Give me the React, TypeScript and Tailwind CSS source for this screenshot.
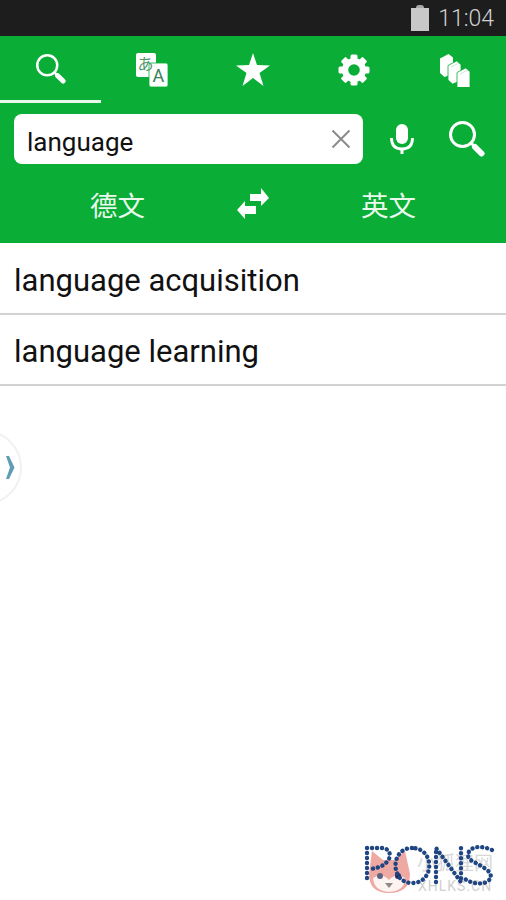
const sans = "font-['Roboto','Noto_Sans_CJK_SC',sans-serif]";
const green = "#0aad35";

function SearchIcon({ size }: { size: number }) {
  return (
    <svg width={size} height={size} viewBox="0 0 36 36" fill="none" stroke="white" strokeLinecap="round">
      <circle cx="13.5" cy="13.5" r="12" strokeWidth="3" />
      <path d="M22 22 L26 26" strokeWidth="3" />
      <path d="M26 26 L32.5 32.5" strokeWidth="6" />
    </svg>
  );
}

function TranslateIcon() {
  return (
    <svg width="34" height="36" viewBox="0 0 34 36">
      <rect x="1" y="1" width="20" height="24" rx="2" fill="white" />
      <rect x="14" y="11" width="19" height="24" rx="2" fill="white" stroke={green} strokeWidth="0.8" />
      <text x="2.5" y="18" fontSize="16" fill="#4f9a6b" fontFamily="'Noto Sans CJK JP'">
        あ
      </text>
      <text x="17.5" y="30" fontSize="18" fill="#38805a" fontFamily="Roboto">
        A
      </text>
    </svg>
  );
}

function StarIcon() {
  return (
    <svg width="34" height="33" viewBox="0 0 34 33" fill="white">
      <path d="M17 0 L21 12 L34 12.5 L23.5 20 L27.5 33 L17 25 L6.5 33 L10.5 20 L0 12.5 L13 12 Z" />
    </svg>
  );
}

function GearIcon() {
  const teeth = [0, 45, 90, 135, 180, 225, 270, 315];
  return (
    <svg width="32" height="32" viewBox="0 0 32 32" fill="white">
      <circle cx="16" cy="16" r="12" />
      {teeth.map((deg) => (
        <rect key={deg} x="12.5" y="0.5" width="7" height="7" rx="1.5" transform={`rotate(${deg} 16 16)`} />
      ))}
      <circle cx="16" cy="16" r="5.8" fill={green} />
    </svg>
  );
}

function BooksIcon() {
  const book = "M0 4.5 L8.5 0 L13 3.5 V20 L4.5 23 L0 19 Z";
  return (
    <svg width="32" height="34" viewBox="0 0 32 34" fill="white">
      <path d={book} transform="translate(1 1)" />
      <path d={book} transform="translate(9 8)" stroke={green} strokeWidth="0.8" />
      <path d={book} transform="translate(18 15)" stroke={green} strokeWidth="0.8" />
      <path d="M12 14 L20 10 M21 21 L29 17" stroke="#cfe9d6" strokeWidth="1" />
    </svg>
  );
}

function MicIcon() {
  return (
    <svg width="24" height="30" viewBox="0 0 24 30" fill="none">
      <rect x="6" y="0" width="12" height="20" rx="6" fill="white" />
      <path d="M1.5 14 Q1.5 25 12 25 Q22.5 25 22.5 14" stroke="white" strokeWidth="2.8" />
      <rect x="10.5" y="24" width="3" height="6" fill="white" />
    </svg>
  );
}

function CloseIcon() {
  return (
    <svg width="20" height="20" viewBox="0 0 20 20" stroke="#8a8a8a" strokeWidth="1.9">
      <path d="M1.5 1.5 L18.5 18.5 M18.5 1.5 L1.5 18.5" />
    </svg>
  );
}

function SwapIcon() {
  return (
    <svg width="34" height="34" viewBox="0 0 34 34" fill="white">
      <path d="M14 8 H25 V2 L33 12 L25 20 V15 H14 Z" />
      <path d="M20 20 H9 V15 L1 24 L9 33 V28 H20 Z" />
    </svg>
  );
}

function PonsLogo() {
  const dots = {
    fill: "none",
    stroke: "#1f4582",
    strokeWidth: 4.4,
    strokeLinecap: "round" as const,
    strokeLinejoin: "round" as const,
    strokeDasharray: "0.1 4.9",
  };
  return (
    <svg width="136" height="56" viewBox="0 0 136 56">
      {/* fox head */}
      <path d="M10 9 L21 18 H33 L43 9 L48 32 Q48 51 27 51 Q7 51 7 32 Z" fill="#efa9a3" />
      <path d="M11 36 Q20 30 27 38 Q34 30 43 36 Q43 49 27 50 Q12 49 11 36 Z" fill="#fdf3f1" />
      <path d="M23 41 H31 L27 46 Z" fill="#8b8b8b" />
      <circle cx="18" cy="34" r="3" fill="#5b6485" />
      <circle cx="36" cy="34" r="3" fill="#1f2f60" />
      {/* letters */}
      <path d="M5 36 V6 H21 Q30 8 27 17 Q22 26 7 27" {...dots} />
      <path d="M50 6 C28 6 28 41 50 41 C73 41 73 6 50 6 Z" {...dots} />
      <path d="M74 40 V6 L99 40 V6" {...dots} />
      <path d="M130 8 Q116 2 108 8 Q102 16 114 21 L124 27 Q133 34 125 40 Q114 44 103 37" {...dots} />
    </svg>
  );
}

export default function App() {
  return (
    <div className={`relative h-[900px] w-[506px] overflow-hidden bg-white ${sans}`}>
      <div className="flex h-9 items-center justify-end gap-[9px] bg-[#1d1d1d] pr-[12px]">
        <div className="flex flex-col items-center">
          <div className="h-[3px] w-2 rounded-t-sm bg-[#a8a8a8]" />
          <div className="h-[23px] w-[18px] bg-[#c8c8c8]" />
        </div>
        <span className="text-[23px] font-light leading-none text-[#d0d0d0]">11:04</span>
      </div>

      <div className="bg-[#0aad35]">
        <div className="flex h-[67px]">
          <div className="flex w-[101px] items-center justify-center border-b-[3px] border-[#e8f8ea] pt-[2px]">
            <SearchIcon size={30} />
          </div>
          <div className="flex w-[101px] items-center justify-center">
            <TranslateIcon />
          </div>
          <div className="flex w-[101px] items-center justify-center">
            <StarIcon />
          </div>
          <div className="flex w-[101px] items-center justify-center">
            <GearIcon />
          </div>
          <div className="flex w-[102px] items-center justify-center">
            <BooksIcon />
          </div>
        </div>

        <div className="flex items-center pl-3.5 pt-[11px]">
          <div className="flex h-[50px] w-[349px] items-center justify-between rounded-lg bg-white pl-[13px] pr-[12px]">
            <span className="pt-[5px] text-[26px] leading-none text-[#111]">language</span>
            <CloseIcon />
          </div>
          <div className="ml-[27px]">
            <MicIcon />
          </div>
          <div className="ml-[35px]">
            <SearchIcon size={36} />
          </div>
        </div>

        <div className="grid h-[79px] grid-cols-[235px_36px_235px] items-center pt-[6px]">
          <span className="text-center text-[27.5px] leading-none text-[#e9f9ec]">德文</span>
          <div className="-mt-[7px] flex justify-center">
            <SwapIcon />
          </div>
          <span className="text-center text-[27.5px] leading-none text-[#e9f9ec]">英文</span>
        </div>
      </div>

      <div className="flex h-[72px] items-center border-b-2 border-[#d2d2d2] pl-3.5 pt-[5px]">
        <span className="text-[31px] leading-none text-[#111]">language acquisition</span>
      </div>
      <div className="flex h-[71px] items-center border-b-2 border-[#d2d2d2] pl-3.5 pt-[4px]">
        <span className="text-[31px] leading-none text-[#111]">language learning</span>
      </div>

      <div className="absolute left-[-54px] top-[430px] flex h-[75px] w-[76px] items-center justify-end rounded-full border-2 border-[#f1f1f1] bg-white pr-[5px]">
        <svg width="10" height="23" viewBox="0 0 10 23">
          <path d="M1 0 H4 L9.5 11.5 L4 23 H1 L5 11.5 Z" fill="#5e9db3" />
        </svg>
      </div>

      <div className="absolute left-[417px] top-[854px] text-[19px] leading-none text-[#d8d8d8]">小狐狸网</div>
      <div className="absolute left-[418px] top-[879px] text-[14px] leading-none tracking-[1px] text-[#d0d0d0]">XHLKS.CN</div>
      <div className="absolute left-[362px] top-[842px]">
        <PonsLogo />
      </div>
    </div>
  );
}
